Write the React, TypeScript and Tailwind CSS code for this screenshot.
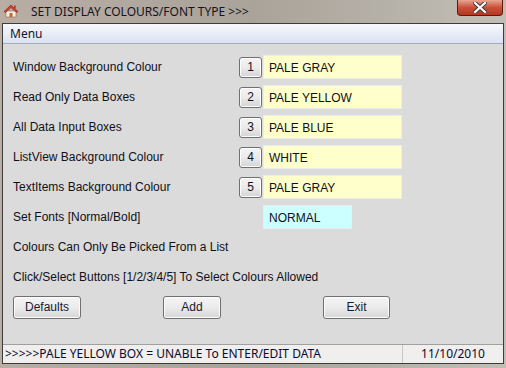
import React from 'react';

const rows = [
  { label: 'Window Background Colour', n: '1', value: 'PALE GRAY' },
  { label: 'Read Only Data Boxes', n: '2', value: 'PALE YELLOW' },
  { label: 'All Data Input Boxes', n: '3', value: 'PALE BLUE' },
  { label: 'ListView Background Colour', n: '4', value: 'WHITE' },
  { label: 'TextItems Background Colour', n: '5', value: 'PALE GRAY' },
];

const HouseIcon = () => (
  <svg width="16" height="16" viewBox="0 0 16 16">
    <path d="M3 8 L3 14 L13 14 L13 8 Z" fill="#f4efe6" stroke="#8a6a50" strokeWidth="0.6" />
    <path d="M1 8.5 L8 2 L15 8.5 L13.5 9.5 L8 4.5 L2.5 9.5 Z" fill="#d8402a" stroke="#8a2010" strokeWidth="0.6" />
    <rect x="6.5" y="10" width="3" height="4" fill="#c06a2a" />
    <rect x="11" y="2.5" width="1.6" height="3" fill="#a03a20" />
  </svg>
);

const WinButton = ({ children, className }: { children: React.ReactNode; className: string }) => (
  <button
    className={`h-[23px] rounded-[3px] border border-[#707070] bg-gradient-to-b from-[#f4f4f4] via-[#ebebeb] to-[#d6d6d6] text-[12px] text-[#1a1a2e] shadow-[inset_0_0_0_1px_#fcfcfc] ${className}`}
  >
    {children}
  </button>
);

export default function App() {
  return (
    <div
      className="w-[506px] h-[368px] flex flex-col bg-gradient-to-r from-[#b9ada4] via-[#a9a399] to-[#c2beb6] overflow-hidden"
      style={{ fontFamily: '"Liberation Sans", Arial, sans-serif' }}
    >
      {/* title bar */}
      <div className="h-[23px] flex items-start relative shrink-0">
        <div className="ml-[3px] mt-[3px]">
          <HouseIcon />
        </div>
        <span
          className="ml-[12px] mt-[3px] text-[12px] text-[#14141e]"
          style={{ fontFamily: '"Noto Sans", "Open Sans", sans-serif' }}
        >
          SET DISPLAY COLOURS/FONT TYPE &gt;&gt;&gt;
        </span>
        <div className="absolute right-[3px] top-0 w-[46px] h-[16px] rounded-b-[4px] border border-t-0 border-[#5a1a10] bg-gradient-to-b from-[#e8a590] via-[#c9503a] to-[#b8341e] flex items-center justify-center">
          <svg width="14" height="11" viewBox="0 0 14 11">
            <path d="M2 1 L12 10 M12 1 L2 10" stroke="#3a3a3a" strokeWidth="4" strokeLinecap="square" />
            <path d="M2 1 L12 10 M12 1 L2 10" stroke="#ffffff" strokeWidth="2.2" strokeLinecap="square" />
          </svg>
        </div>
      </div>

      {/* window body */}
      <div className="mx-[2px] flex-1 flex flex-col border border-[#3c3c3c] bg-[#dbdbdb]">
        {/* menu bar */}
        <div className="h-[20px] shrink-0 flex items-center bg-gradient-to-b from-[#f6f8fc] to-[#dbe2f2] border-b border-[#a6acbd]">
          <span
            className="ml-[7px] text-[12px] text-[#14142a]"
            style={{ fontFamily: '"Noto Sans", "Open Sans", sans-serif' }}
          >
            Menu
          </span>
        </div>

        {/* content */}
        <div className="flex-1 flex flex-col pt-[8px] pl-[10px] text-[12px] text-[#101018]">
          {rows.map((r) => (
            <div key={r.n} className="h-[30px] flex items-center">
              <span className="w-[226px]">{r.label}</span>
              <button className="w-[23px] h-[21px] rounded-[3px] border border-[#707070] bg-gradient-to-b from-[#f4f4f4] via-[#ebebeb] to-[#d4d4d4] text-[12px] text-[#101018] shadow-[inset_0_0_0_1px_#fcfcfc]">
                {r.n}
              </button>
              <div className="ml-[1px] w-[139px] h-[24px] bg-[#ffffcc] border border-[#ececec] pl-[5px] pt-[3px]">
                {r.value}
              </div>
            </div>
          ))}
          <div className="h-[30px] flex items-center">
            <span className="w-[250px]">Set Fonts [Normal/Bold]</span>
            <div className="w-[89px] h-[24px] bg-[#ccffff] border border-[#ececec] pl-[5px] pt-[3px]">NORMAL</div>
          </div>
          <div className="h-[30px] flex items-center">Colours Can Only Be Picked From a List</div>
          <div className="h-[30px] flex items-center">Click/Select Buttons [1/2/3/4/5] To Select Colours Allowed</div>
          <div className="h-[30px] flex items-center">
            <WinButton className="w-[68px]">Defaults</WinButton>
            <WinButton className="ml-[82px] w-[58px]">Add</WinButton>
            <WinButton className="ml-[102px] w-[67px]">Exit</WinButton>
          </div>
        </div>

        {/* status bar */}
        <div
          className="h-[19px] shrink-0 flex items-center bg-[#f0efed] border-t border-[#a0a0a0] text-[12px] text-[#0a0a30]"
          style={{ fontFamily: '"Noto Sans", "Open Sans", sans-serif' }}
        >
          <span className="pl-[2px] w-[399px] whitespace-nowrap overflow-hidden">
            &gt;&gt;&gt;&gt;&gt;PALE YELLOW BOX = UNABLE To ENTER/EDIT DATA
          </span>
          <span className="h-full border-l border-[#c8c8c8] flex-1 flex items-center justify-center">11/10/2010</span>
        </div>
      </div>
      <div className="h-[4px] shrink-0" />
    </div>
  );
}
